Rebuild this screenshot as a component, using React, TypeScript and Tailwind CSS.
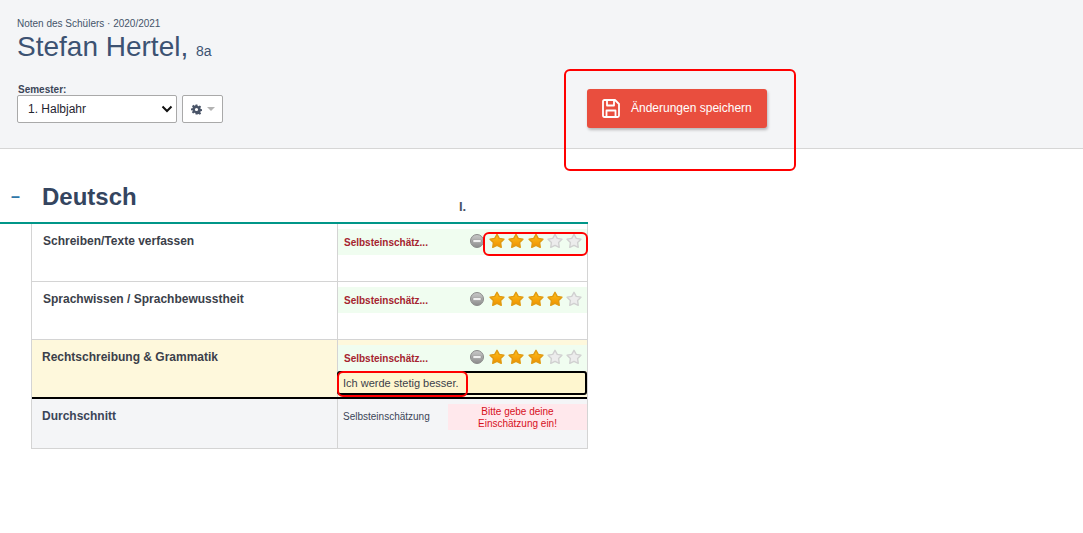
import React from "react";

function Star({ on, id }: { on: boolean; id: string }) {
  const d = "M7.5 1.2 L9.6 5 L14 5.8 L10.9 9 L11.5 13.5 L7.5 11.5 L3.5 13.5 L4.1 9 L1 5.8 L5.4 5 Z";
  return (
    <svg width="16" height="16" viewBox="0 0 15 15" className="block">
      <defs>
        <linearGradient id={id} x1="0" y1="0" x2="0" y2="1">
          <stop offset="0" stopColor="#ffc21a" />
          <stop offset="1" stopColor="#ee8f00" />
        </linearGradient>
      </defs>
      {on ? (
        <path d={d} fill={`url(#${id})`} stroke="#e09a12" strokeWidth="1.3" strokeLinejoin="round" />
      ) : (
        <path d={d} fill="#ececec" stroke="#d0d0d0" strokeWidth="1.3" strokeLinejoin="round" />
      )}
    </svg>
  );
}

function Minus({ id }: { id: string }) {
  return (
    <svg width="14" height="14" viewBox="0 0 14 14" className="block">
      <defs>
        <linearGradient id={id} x1="0" y1="0" x2="0" y2="1">
          <stop offset="0" stopColor="#c9c9c9" />
          <stop offset="1" stopColor="#8c8c8c" />
        </linearGradient>
      </defs>
      <circle cx="7" cy="7" r="6.5" fill={`url(#${id})`} stroke="#8a8a8a" />
      <rect x="3" y="5.6" width="8" height="2.8" rx="0.6" fill="#f6f6f6" stroke="#7e7e7e" strokeWidth="0.5" />
    </svg>
  );
}

function Rating({ n, row }: { n: number; row: string }) {
  return (
    <div className="h-[26px] bg-[#f0fdf0] flex items-center pl-[6px] pr-[5px]">
      <span className="text-[10px] font-bold text-[#a5242f] flex-1">Selbsteinschätz...</span>
      <span className="mr-[5px] -translate-y-px"><Minus id={`m-${row}`} /></span>
      <span className="flex gap-[3.2px] -translate-y-px">
        {[0, 1, 2, 3, 4].map((i) => (
          <Star key={i} on={i < n} id={`g-${row}-${i}`} />
        ))}
      </span>
    </div>
  );
}

function Row({ title, n, row }: { title: string; n: number; row: string }) {
  return (
    <div className="flex h-[58px] border-b border-[#d4d4d4]">
      <div className="w-[306px] shrink-0 border-r border-[#d4d4d4] pl-[11px] pt-[9px] text-[12px] font-bold text-[#3b3f4a] leading-[16px]">
        {title}
      </div>
      <div className="flex-1 pt-[5px]">
        <Rating n={n} row={row} />
      </div>
    </div>
  );
}

export default function App() {
  return (
    <div className="relative w-[1083px] h-[533px] overflow-hidden bg-white font-['Liberation_Sans',Arial,sans-serif]">
      <header className="flex h-[149px] bg-[#f4f5f7] border-b border-[#d6d6d6]">
        <div className="w-[587px] shrink-0 pl-[17px] pt-[17px]">
          <div className="text-[10px] leading-[13px] text-[#44546a]">Noten des Schülers · 2020/2021</div>
          <h1 className="text-[28px] leading-[32px] text-[#3c5272] mt-[1px]">
            Stefan Hertel, <span className="text-[14px]">8a</span>
          </h1>
          <div className="text-[10px] font-bold leading-[11px] text-[#3b4558] mt-[17px] ml-[1px]">Semester:</div>
          <div className="flex gap-[5px]">
            <div className="w-[160px] h-[28px] bg-white border border-[#a9a9a9] rounded-[2px] flex items-center pl-[10px] pr-[3px] text-[12px] text-[#1f2430]">
              <span className="flex-1">1. Halbjahr</span>
              <svg width="12" height="8" viewBox="0 0 12 8">
                <path d="M1.5 1.5 L6 6 L10.5 1.5" fill="none" stroke="#111" strokeWidth="2" />
              </svg>
            </div>
            <div className="w-[41px] h-[28px] bg-white border border-[#a9a9a9] rounded-[2px] flex items-center justify-center gap-[5px]">
              <svg width="11" height="11" viewBox="0 0 24 24">
                <path
                  fill="#4a5568"
                  fillRule="evenodd"
                  d="M10 1h4l.6 3.2 2 .8 2.7-1.8 2.8 2.8-1.8 2.7.8 2 3.2.6v4l-3.2.6-.8 2 1.8 2.7-2.8 2.8-2.7-1.8-2 .8L14 23h-4l-.6-3.2-2-.8-2.7 1.8-2.8-2.8 1.8-2.7-.8-2L0 14v-4l3.2-.6.8-2L2.2 4.7 5 1.9l2.7 1.8 2-.8zM12 8.5a3.5 3.5 0 100 7 3.5 3.5 0 000-7z"
                />
              </svg>
              <svg width="8" height="4" viewBox="0 0 8 4"><path d="M0 0h8L4 4z" fill="#b3b3b3" /></svg>
            </div>
          </div>
        </div>
        <div className="pt-[89px]">
          <button className="w-[180px] h-[39px] bg-[#e94e3e] rounded-[3px] shadow-[1px_2px_3px_rgba(0,0,0,0.25)] flex items-center pl-[15px] text-white text-[12px]">
            <svg width="18" height="19" viewBox="0 0 18 19" fill="none" stroke="#fff" strokeWidth="1.8" strokeLinejoin="round">
              <path d="M1 2.5 Q1 1 2.5 1 H13 L17 5 V16.5 Q17 18 15.5 18 H2.5 Q1 18 1 16.5 Z" />
              <path d="M5 1 V6.5 H12 V1" />
              <path d="M4.5 18 V11.5 H13.5 V18" />
            </svg>
            <span className="ml-[11px] -translate-y-px">Änderungen speichern</span>
          </button>
        </div>
      </header>

      <section className="w-[588px]">
        <div className="relative h-[73px]">
          <div className="flex items-center h-[30px] pt-[33px] box-content">
            <span className="w-[42px] pl-[11px] text-[#2f77a8] text-[16px] font-bold leading-[30px]">–</span>
            <h2 className="text-[24px] font-bold text-[#34455f] leading-[30px]">Deutsch</h2>
          </div>
          <span className="absolute left-[459px] top-[50px] text-[13px] font-bold text-[#4a5568] leading-[16px]">I.</span>
        </div>
        <div className="border-t-2 border-[#009688]">
          <div className="ml-[31px] border-x border-[#d4d4d4]">
            <Row title="Schreiben/Texte verfassen" n={3} row="a" />
            <Row title="Sprachwissen / Sprachbewusstheit" n={4} row="b" />
            <div className="flex h-[59px] bg-[#fef8dc] border-b-2 border-black">
              <div className="w-[306px] shrink-0 border-r border-[#d4d4d4] pl-[10px] pt-[9px] text-[12px] font-bold text-[#3b3f4a] leading-[16px]">
                Rechtschreibung &amp; Grammatik
              </div>
              <div className="flex-1 pt-[5px]">
                <Rating n={3} row="c" />
                <div className="h-[24px] -ml-px border-2 border-black rounded-[3px] bg-[#fef6cf] pl-[4px] text-[11px] leading-[20px] text-[#3b3f4a]">
                  Ich werde stetig besser.
                </div>
              </div>
            </div>
            <div className="flex h-[50px] bg-[#f4f5f7] border-b border-[#d4d4d4]">
              <div className="w-[306px] shrink-0 border-r border-[#d4d4d4] pl-[10px] pt-[9px] text-[12px] font-bold text-[#3b4558] leading-[16px]">
                Durchschnitt
              </div>
              <div className="flex-1 flex items-start pt-[5px]">
                <span className="w-[110px] pl-[5px] text-[10px] leading-[26px] text-[#3b4558]">Selbsteinschätzung</span>
                <div className="flex-1 h-[26px] bg-[#ffe8ec] text-center text-[10px] leading-[12px] text-[#d6101c] pt-[2px]">
                  Bitte gebe deine
                  <br />
                  Einschätzung ein!
                </div>
              </div>
            </div>
          </div>
        </div>
      </section>

      <div className="absolute left-[564px] top-[69px] w-[232px] h-[102px] border-2 border-[#f00] rounded-[6px]" />
      <div className="absolute left-[483px] top-[232px] w-[105px] h-[24px] border-2 border-[#f00] rounded-[6px]" />
      <div className="absolute left-[337px] top-[371px] w-[131px] h-[26px] border-2 border-[#f00] rounded-[6px]" />
    </div>
  );
}
